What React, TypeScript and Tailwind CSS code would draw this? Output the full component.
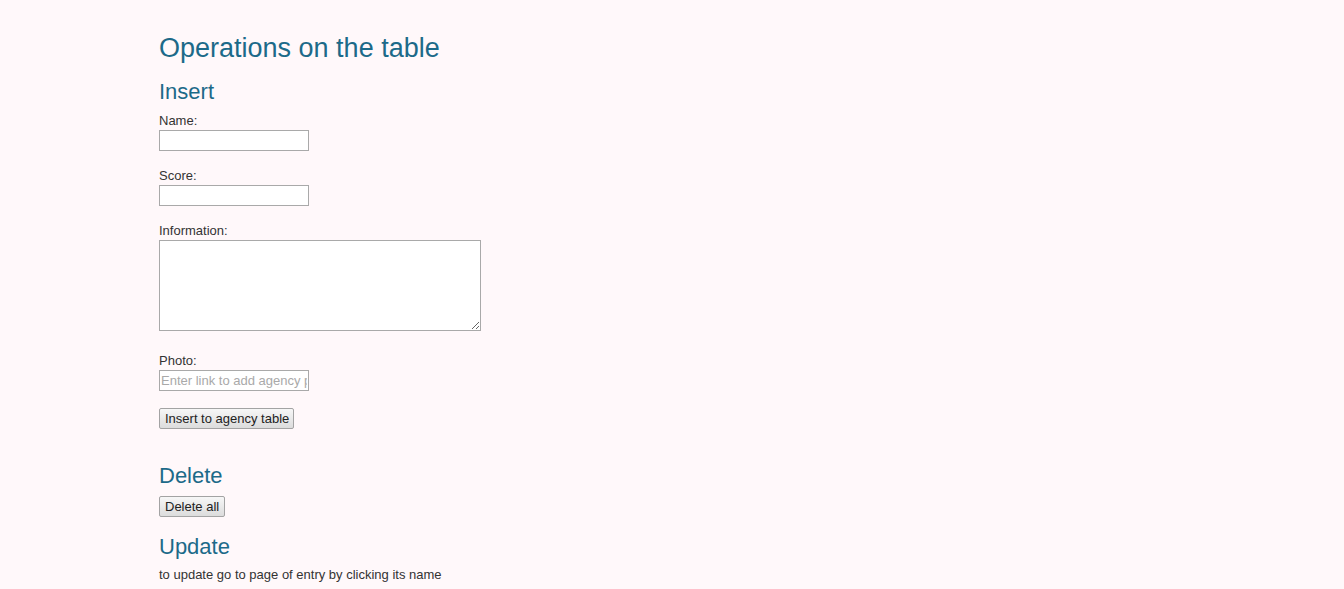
export default function App() {
  const label = "block text-[13px] leading-[15px] text-[#333]";
  const input =
    "block w-[150px] h-[21px] border border-[#a9a9a9] bg-white px-[1px] text-[13px] text-[#333] outline-none placeholder:text-[#a9a9a9]";
  const button =
    "block h-[21px] overflow-hidden whitespace-nowrap rounded-[2px] border border-[#a3a3a3] bg-gradient-to-b from-[#f7f7f7] to-[#dcdcdc] px-[5px] text-left text-[13px] leading-[19px] text-[#222]";

  return (
    <div
      className="min-h-screen bg-[#fff8fa] pl-[159px] pt-[33px]"
      style={{ fontFamily: '"Liberation Sans", Arial, sans-serif' }}
    >
      <h1 className="text-[27px] leading-[31px] text-[#1c6a89]">Operations on the table</h1>

      <h2 className="mt-[15px] text-[22px] leading-[26px] text-[#1c6a89]">Insert</h2>
      <form onSubmit={(e) => e.preventDefault()}>
        <label className={`${label} mt-[8px]`}>Name:</label>
        <input type="text" className={`${input} mt-[2px]`} />

        <label className={`${label} mt-[17px]`}>Score:</label>
        <input type="text" className={`${input} mt-[2px]`} />

        <label className={`${label} mt-[17px]`}>Information:</label>
        <textarea className="mt-[2px] block h-[91px] w-[322px] border border-[#a9a9a9] bg-white p-[2px] text-[13px] outline-none" />

        <label className={`${label} mt-[22px]`}>Photo:</label>
        <input
          type="text"
          placeholder="Enter link to add agency photo"
          className={`${input} mt-[2px]`}
        />

        <button type="submit" className={`${button} mt-[17px] w-[135px]`}>
          Insert to agency table
        </button>
      </form>

      <h2 className="mt-[34px] text-[22px] leading-[26px] text-[#1c6a89]">Delete</h2>
      <button type="button" className={`${button} mt-[7px] w-[66px]`}>
        Delete all
      </button>

      <h2 className="mt-[17px] text-[22px] leading-[26px] text-[#1c6a89]">Update</h2>
      <p className="mt-[7px] text-[13px] leading-[15px] text-[#333]">
        to update go to page of entry by clicking its name
      </p>
    </div>
  );
}
